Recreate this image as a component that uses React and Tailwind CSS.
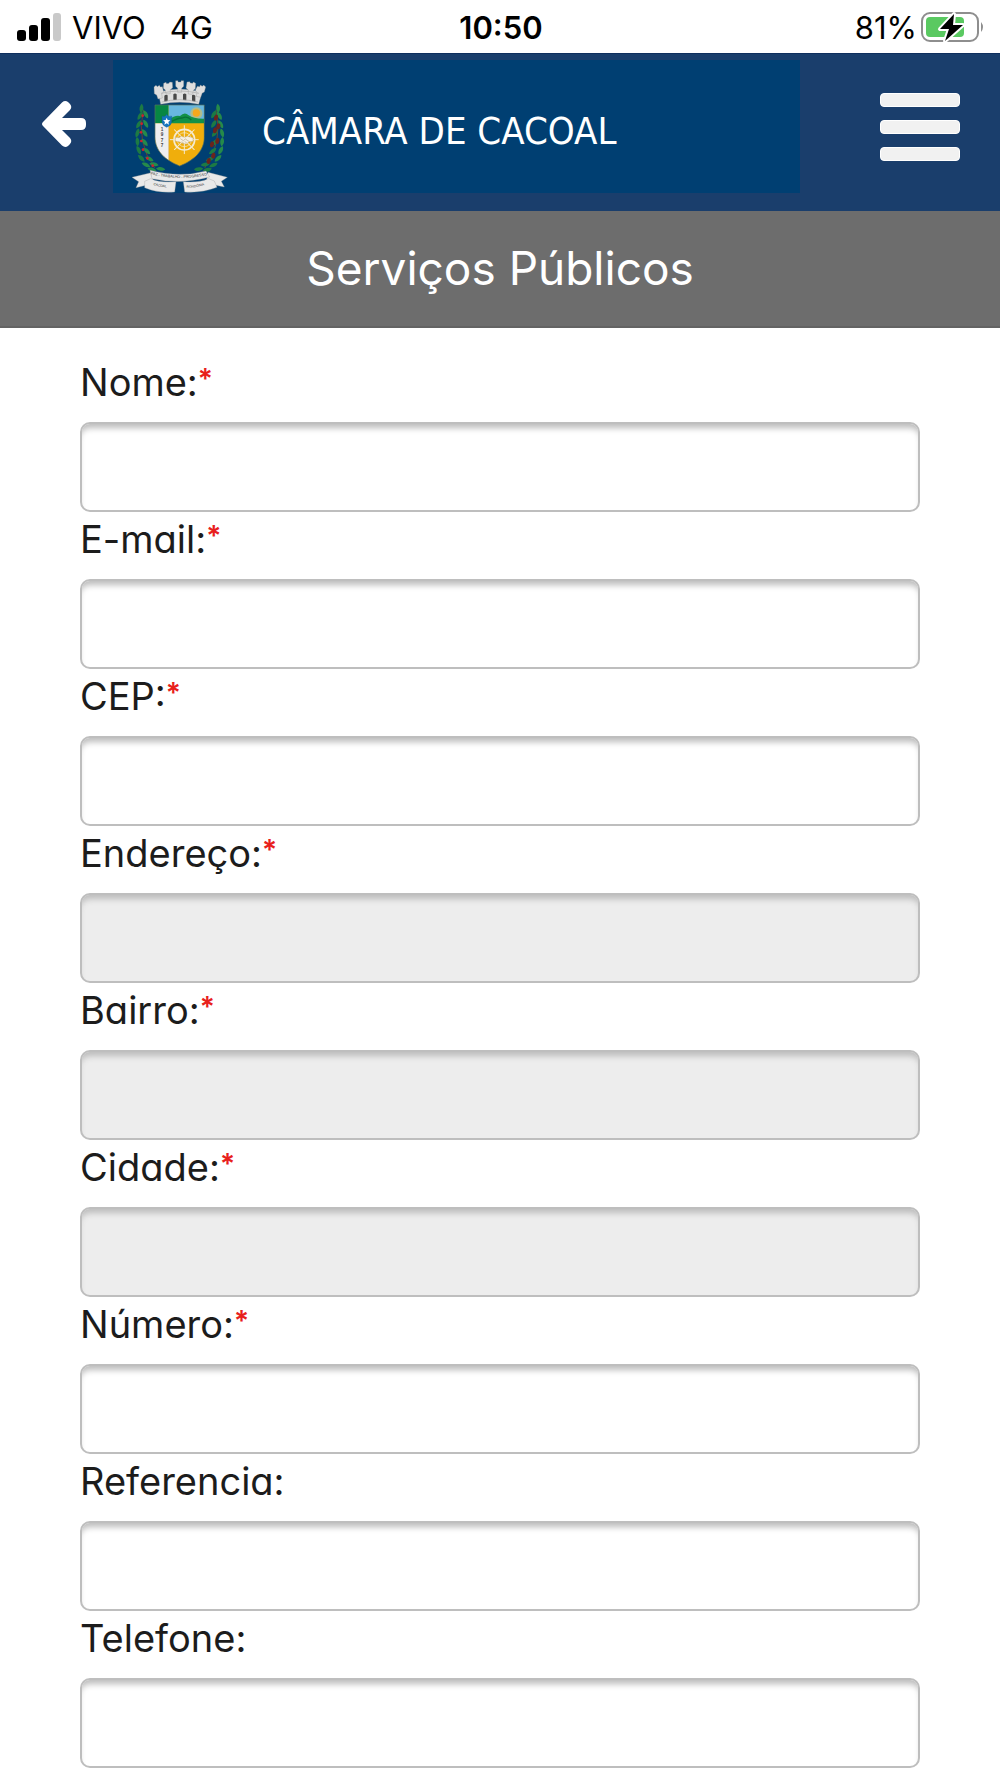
import React from "react";

const fields = [
  { id: "nome", label: "Nome:", required: true },
  { id: "email", label: "E-mail:", required: true, type: "email" },
  { id: "cep", label: "CEP:", required: true },
  { id: "endereco", label: "Endereço:", required: true, disabled: true },
  { id: "bairro", label: "Bairro:", required: true, disabled: true },
  { id: "cidade", label: "Cidade:", required: true, disabled: true },
  { id: "numero", label: "Número:", required: true },
  { id: "referencia", label: "Referencia:" },
  { id: "telefone", label: "Telefone:", type: "tel" },
];

function SignalIcon() {
  return (
    <svg viewBox="0 0 45 29" className="h-[29px] w-[45px]" aria-hidden="true">
      <rect x="0" y="17" width="9" height="11" rx="3" fill="#000" />
      <rect x="12" y="12" width="9" height="16" rx="3" fill="#000" />
      <rect x="24" y="5" width="9" height="23" rx="3" fill="#000" />
      <rect x="36" y="0" width="8" height="28" rx="3" fill="#c9c9c9" />
    </svg>
  );
}

function BatteryIcon() {
  return (
    <svg viewBox="0 0 64 34" className="h-[34px] w-[64px]" aria-hidden="true">
      <rect x="1" y="3" width="56" height="28" rx="8" fill="#fff" stroke="#8e8e8e" strokeWidth="2" />
      <rect x="5" y="7" width="38" height="20" rx="4" fill="#5ac961" />
      <path d="M60 12q4 5 0 10z" fill="#8e8e8e" />
      <path d="M33 4L19 19h9l-4 12 18-16H32z" fill="#000" stroke="#fff" strokeWidth="4" paintOrder="stroke" strokeLinejoin="round" />
    </svg>
  );
}

function BackArrow() {
  return (
    <svg viewBox="0 0 44 48" className="h-[48px] w-[44px]" aria-hidden="true">
      <path
        d="M1 22L20 2.500Q23 0 26 2L28 4Q30.500 7 28 10L20 18H39Q44 18 44 23V25Q44 30 39 30H20L28 38Q30.500 41 28 44L26 46Q23 48 20 45.500L1 26Q-1 24 1 22Z"
        fill="#fff"
      />
    </svg>
  );
}

const leaves = [
  [94, 146, 5], [90, 168, 30], [107, 164, -30], [86, 194, 30], [107, 192, -30], [82, 220, 15],
  [104, 220, -35], [82, 246, -5], [104, 248, -40], [86, 272, -25], [110, 274, -50], [94, 296, -45],
  [118, 298, -65], [108, 316, -65], [132, 314, -80], [126, 330, -75], [152, 328, -85],
];

function Leaf({ x, y, r, fill }) {
  return (
    <path
      d="M0-14C9-6 7 7 0 14C-7 7-7-6 0-14Z"
      fill={fill}
      transform={`translate(${x} ${y}) rotate(${r})`}
    />
  );
}

function Crest() {
  return (
    <svg viewBox="60 55 300 345" className="h-[115px] w-[100px] shrink-0" role="img" aria-label="Brasão de Cacoal">
      <defs>
        <path id="ribbon-main" d="M122 344Q210 366 302 344" />
        <path id="ribbon-left" d="M130 375Q154 386 192 382" />
        <path id="ribbon-right" d="M230 384Q260 386 304 370" />
        <clipPath id="shield-clip">
          <path d="M135 136H283V230C283 276 251 302 209 319C167 302 135 276 135 230Z" />
        </clipPath>
      </defs>

      <path d="M100 150Q78 250 134 325" fill="none" stroke="#6b3b34" strokeWidth="3" />
      <path d="M318 150Q340 250 284 325" fill="none" stroke="#5d4b36" strokeWidth="3" />
      {leaves.map(([x, y, r]) => (
        <Leaf key={`l${x}-${y}`} x={x} y={y} r={-r * -1} fill={x > 100 ? "#258a4a" : "#1c7a44"} />
      ))}
      {leaves.map(([x, y, r]) => (
        <Leaf key={`r${x}-${y}`} x={418 - x} y={y} r={-r} fill={x > 100 ? "#1c7a44" : "#258a4a"} />
      ))}
      {[[98, 168], [95, 192], [93, 218], [94, 244], [99, 270], [112, 296], [128, 318]].map(([x, y]) => (
        <circle key={`b${y}`} cx={x} cy={y} r="4" fill="#d0212c" />
      ))}
      {[[318, 174], [325, 200], [315, 212], [322, 244], [306, 254], [310, 288], [296, 304]].map(([x, y]) => (
        <ellipse key={`c${y}`} cx={x} cy={y} rx="6" ry="9" fill="#6b241c" transform={`rotate(12 ${x} ${y})`} />
      ))}

      <g fill="#dedede" stroke="#8b8b8b" strokeWidth="1">
        <path d="M152 134L145 98Q209 78 276 98L266 134Q209 122 152 134Z" />
        <path d="M132 82l6-5 4 4 6-4 3 5 6-1 4 15-6 7 2 12-13 3-4-12-7-4Z" />
        <path d="M161 71l7-3 2 4 7-1 2-4 8 1 1 16-7 6v12l-13 1-2-12-6-5Z" />
        <path d="M197 63h7v4h9v-4h8v17l-6 6v12h-12V86l-6-6Z" />
        <path d="M231 67l8-1 2 4 7 1 2-4 7 4-1 16-6 5-2 12-13-1v-12l-7-6Z" />
        <path d="M262 80l7 1 2-5 6 4 4-4 6 6-4 15-7 4-4 12-13-3 2-12-5-6Z" />
      </g>
      <g fill="#484848">
        <path d="M163 108q5-5 10-1v17l-10 2ZM190 104q5-5 10 0v17h-10ZM219 104q5-5 10 0v18l-10-1ZM246 107q5-4 10 1v18l-10-2Z" />
      </g>
      <path d="M153 101Q209 87 267 101M155 127Q209 113 264 127" fill="none" stroke="#aaa" strokeWidth="2" />

      <g clipPath="url(#shield-clip)">
        <rect x="135" y="136" width="148" height="184" fill="#f0ae0c" />
        <rect x="135" y="136" width="41" height="55" fill="#078743" />
        <rect x="176" y="136" width="108" height="54" fill="#68b7df" />
        <circle cx="259" cy="161" r="18" fill="#f6c13a" opacity="0.5" />
        <circle cx="259" cy="160" r="11" fill="#f5a81c" />
        <path d="M176 180Q196 165 210 169Q224 155 236 167Q251 178 284 177V191H176Z" fill="#129147" />
        <path d="M184 186Q204 174 217 175Q232 168 244 181" fill="none" stroke="#077139" strokeWidth="4" />
        <rect x="135" y="191" width="41" height="130" fill="#eeeeef" />
        <path d="M176 191V310" stroke="#b9a16b" strokeWidth="1" />
      </g>
      <path d="M135 136H283V230C283 276 251 302 209 319C167 302 135 276 135 230Z" fill="none" stroke="#58705d" strokeWidth="2" />
      <path d="M156 169Q164 174 170 164Q176 174 185 169V187Q184 198 170 203Q157 198 156 187Z" fill="#1475be" stroke="#155786" />
      <path d="M170 174l3 7 8 1-6 5 2 8-7-4-7 4 2-8-6-5 8-1Z" fill="#fff" />

      <g fill="none" stroke="#f4ead0" strokeWidth="3">
        <circle cx="223" cy="240" r="31" strokeWidth="5" />
        <circle cx="223" cy="240" r="21" strokeWidth="2" />
        {[0, 45, 90, 135].map((angle) => (
          <path key={angle} d="M223 198V282" strokeLinecap="round" transform={`rotate(${angle} 223 240)`} />
        ))}
      </g>
      <path d="M196 233l11 1 8-4 8 3 9-3 17 4v11l-11 1-9 7-12-2-10-5-11-1Z" fill="#f7f0e3" stroke="#a79572" />
      <path d="M211 237l9 6 6-5 12 8M215 246l6 4M224 246l6 3" fill="none" stroke="#a79572" strokeWidth="1.500" />
      <g fontFamily="Liberation Sans, sans-serif" fontSize="14" fontWeight="700" fill="#444" textAnchor="middle">
        <text x="156" y="214">1</text>
        <text x="156" y="230">9</text>
        <text x="156" y="246">7</text>
        <text x="156" y="262">7</text>
      </g>

      <g fill="#e9e9e9" stroke="#999" strokeWidth="1">
        <path d="M123 339L66 353L86 366L78 384L132 371Z" />
        <path d="M294 338L352 353L334 365L343 382L288 371Z" />
        <path d="M104 365L122 357Q150 370 198 366L194 397Q144 401 104 384Z" />
        <path d="M313 364L296 357Q266 370 220 366L224 397Q274 401 321 383Z" />
        <path d="M120 332Q209 355 288 334L299 352Q209 376 126 357Z" />
      </g>
      <g fontFamily="Liberation Sans, sans-serif" fill="#333">
        <text fontSize="11">
          <textPath href="#ribbon-main">PAZ - TRABALHO - PROGRESSO</textPath>
        </text>
        <text fontSize="10">
          <textPath href="#ribbon-left">CACOAL</textPath>
        </text>
        <text fontSize="10">
          <textPath href="#ribbon-right">RONDÔNIA</textPath>
        </text>
      </g>
    </svg>
  );
}

function StatusBar() {
  return (
    <div className="grid h-[53px] grid-cols-3 items-center pt-px pr-[15px] pl-[17px] text-[31px] leading-none text-black">
      <div className="flex items-center">
        <SignalIcon />
        <span className="ml-[10px]">VIVO</span>
        <span className="ml-6">4G</span>
      </div>
      <time className="text-center font-semibold">10:50</time>
      <div className="flex items-center justify-end gap-1">
        <span>81%</span>
        <BatteryIcon />
      </div>
    </div>
  );
}

function Header() {
  return (
    <header className="flex h-[158px] items-start border-t border-[#0f2f5e] bg-[#1a3e6c] pt-[6px] pr-10 pl-[42px]">
      <button type="button" aria-label="Voltar" className="mt-10 shrink-0">
        <BackArrow />
      </button>
      <a href="#" className="mr-20 ml-[27px] flex h-[133px] min-w-0 flex-1 items-end bg-[#003f72] pl-[17px] text-white">
        <Crest />
        <span className="ml-8 self-center pt-2 font-['DejaVu_Sans_Condensed','Noto_Sans',sans-serif] text-[38px] leading-none whitespace-nowrap">
          CÂMARA DE CACOAL
        </span>
      </a>
      <button type="button" aria-label="Abrir menu" className="mt-[33px] flex w-20 shrink-0 flex-col gap-[13px]">
        <span className="h-[14px] rounded-[4px] border border-white bg-[#f1f1f1]" />
        <span className="h-[14px] rounded-[4px] border border-white bg-[#f1f1f1]" />
        <span className="h-[14px] rounded-[4px] border border-white bg-[#f1f1f1]" />
      </button>
    </header>
  );
}

function Field({ id, label, required, disabled, type = "text" }) {
  return (
    <div>
      <label htmlFor={id} className="flex h-[67px] items-start pt-1 text-[38px] leading-[46px] text-[#1c1c1c]">
        {label}
        {required && <span className="text-[28px] leading-[40px] font-semibold text-[#e8201c]">*</span>}
      </label>
      <input
        id={id}
        name={id}
        type={type}
        required={required}
        disabled={disabled}
        className="block h-[90px] w-full rounded-[10px] border-2 border-[#bebebe] bg-white px-4 text-[38px] shadow-[inset_0_7px_6px_-3px_#bcbcbc] disabled:bg-[#ededed]"
      />
    </div>
  );
}

export default function App() {
  return (
    <div className="min-h-screen bg-white font-['Inter',sans-serif] [font-feature-settings:'cv11']">
      <StatusBar />
      <Header />
      <main>
        <h1 className="flex h-[117px] items-center justify-center border-b-2 border-[#636363] bg-[#6d6d6d] text-[46px] font-normal text-white">
          Serviços Públicos
        </h1>
        <form className="px-20 pt-[27px] pb-[9px]">
          {fields.map((field) => (
            <Field key={field.id} {...field} />
          ))}
        </form>
      </main>
    </div>
  );
}
